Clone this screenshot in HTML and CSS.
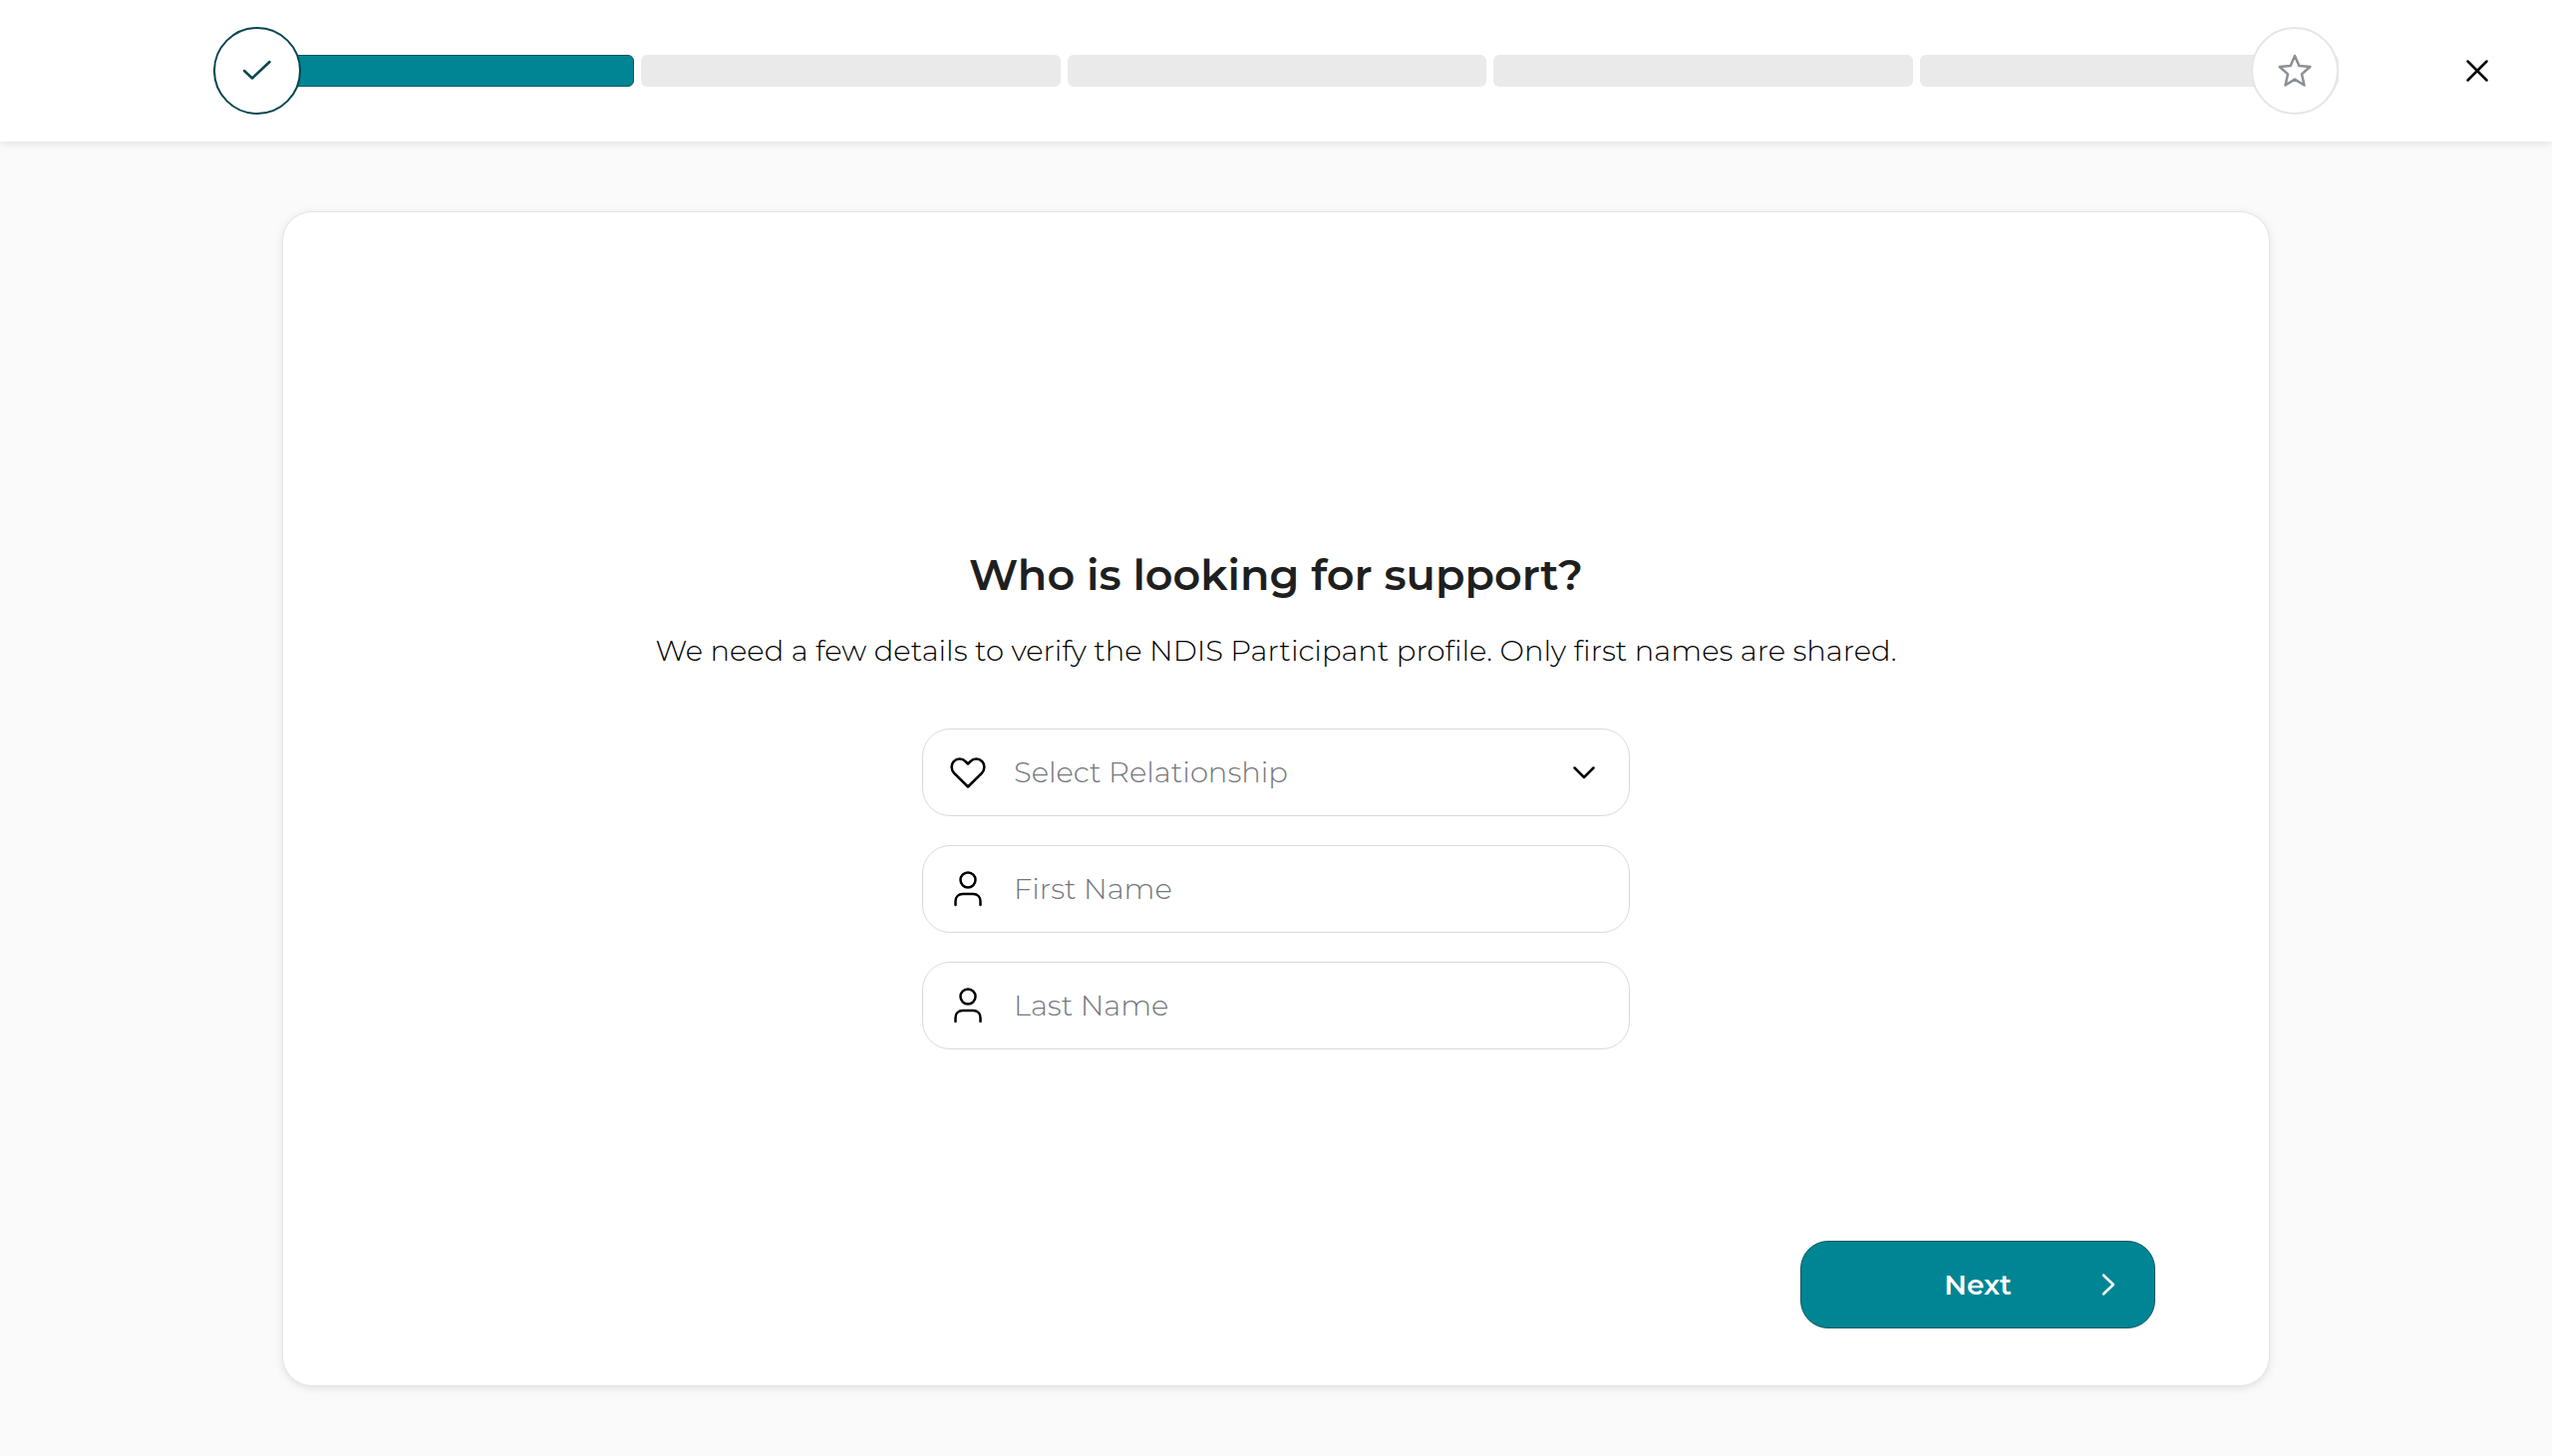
FILE: index.html
```html
<!DOCTYPE html>
<html lang="en">
<head>
    <meta charset="UTF-8">
    <meta name="viewport" content="width=device-width, initial-scale=1.0">
    <title>Who is looking for support?</title>
    <link rel="stylesheet" href="styles.css">
</head>
<body>
    <header class="header">
        <div class="progress">
            <div class="step step-done"></div>
            <div class="step"></div>
            <div class="step"></div>
            <div class="step"></div>
            <div class="step"></div>
            <!-- Round markers over both ends of the bar -->
            <div class="marker marker-start">
                <svg width="32" height="32" viewBox="0 0 32 32"><path d="M3 16l8 7.500L28.500 7"/></svg>
            </div>
            <div class="marker marker-end">
                <svg width="36" height="36" viewBox="0 0 36 36"><path d="M18 3l4.300 10 11 1-8.300 7.400 2.500 11.100L18 26.600 8.500 32.500 11 21.400 2.700 14l11-1z"/></svg>
            </div>
        </div>
        <button type="button" class="btn-close" aria-label="Close">
            <svg width="24" height="24" viewBox="0 0 24 24"><path d="M2.500 2.500l19 19M21.500 2.500l-19 19"/></svg>
        </button>
    </header>

    <main class="main">
        <form class="card">
            <div class="content">
                <h1>Who is looking for support?</h1>
                <p class="intro">We need a few details to verify the NDIS Participant profile. Only first names are shared.</p>

                <div class="fields">
                    <label class="field">
                        <svg class="icon" width="40" height="40" viewBox="0 0 40 40"><path d="M20 34.500L6.200 20.900C3 17.500 2.800 12.500 5.700 9.200c3.300-3.500 8.700-3.400 11.900-.100L20 11.500l2.400-2.400c3.200-3.300 8.600-3.400 11.900.100 2.900 3.300 2.700 8.300-.500 11.700z"/></svg>
                        <select aria-label="Relationship">
                            <option>Select Relationship</option>
                            <option>Myself</option>
                            <option>Family member</option>
                            <option>Friend</option>
                        </select>
                        <svg class="chevron" width="24" height="24" viewBox="0 0 24 24"><path d="M2.500 7.500l9.500 9.500L21.500 7.500"/></svg>
                    </label>
                    <label class="field">
                        <svg class="icon" width="40" height="40" viewBox="0 0 40 40"><circle cx="20" cy="11" r="7.500"/><path d="M7.500 36v-3.500c0-4.500 3-7.500 7.500-7.500h10c4.500 0 7.500 3 7.500 7.500V36"/></svg>
                        <input type="text" placeholder="First Name" aria-label="First Name">
                    </label>
                    <label class="field">
                        <svg class="icon" width="40" height="40" viewBox="0 0 40 40"><circle cx="20" cy="11" r="7.500"/><path d="M7.500 36v-3.500c0-4.500 3-7.500 7.500-7.500h10c4.500 0 7.500 3 7.500 7.500V36"/></svg>
                        <input type="text" placeholder="Last Name" aria-label="Last Name">
                    </label>
                </div>
            </div>

            <button type="button" class="btn-next">
                <span>Next</span>
                <svg width="24" height="24" viewBox="0 0 24 24"><path d="M7 2.500l10 9.500L7 21.500"/></svg>
            </button>
        </form>
    </main>
</body>
</html>
```
FILE: styles.css
```css
* {
    margin: 0;
    padding: 0;
    box-sizing: border-box;
}
body {
    font-family: Montserrat, Inter, sans-serif;
    background: #fafafa;
    color: #1f1f1f;
    min-height: 100vh;
    display: flex;
    flex-direction: column;
}
svg {
    display: block;
    flex: none;
    fill: none;
    stroke: currentColor;
    stroke-width: 2.5;
    stroke-linecap: round;
    stroke-linejoin: round;
}
button {
    font-family: inherit;
    border: none;
    cursor: pointer;
}

/* Header with progress */
.header {
    display: grid;
    grid-template-columns: 214px 1fr 214px;
    align-items: center;
    height: 142px;
    background: #fff;
    box-shadow: 0 2px 8px rgba(0, 0, 0, 0.1);
}
.progress {
    grid-column: 2;
    position: relative;
    display: flex;
    gap: 7px;
}
.step {
    flex: 1;
    height: 32px;
    border-radius: 6px;
    background: #eaeaea;
}
.step-done {
    background: #008594;
    border: 1px solid #055660;
    border-radius: 16px 6px 6px 16px; /* stays hidden under the marker */
}
.marker {
    position: absolute;
    top: 50%;
    transform: translateY(-50%);
    width: 88px;
    height: 88px;
    display: flex;
    align-items: center;
    justify-content: center;
    border-radius: 50%;
    background: #fff;
}
.marker-start {
    left: 0;
    border: 2px solid #07474f;
    color: #07474f;
}
.marker-end {
    right: 0;
    border: 2px solid #e6e6e6;
    color: #8c8f94;
}
.btn-close {
    justify-self: end;
    margin-right: 54px;
    padding: 9px;
    background: none;
    color: #000;
}

/* Card */
.main {
    flex: 1;
    display: flex;
    padding: 70px 283px;
}
.card {
    flex: 1;
    display: grid;
    grid-template-rows: 1fr auto 1fr;
    padding: 57px 114px;
    background: #fff;
    border: 1px solid #e4e4e4;
    border-radius: 30px;
    box-shadow: 0 2px 8px rgba(0, 0, 0, 0.1);
}
.content {
    grid-row: 2;
    text-align: center;
}
h1 {
    font-size: 43px;
    font-weight: 600;
    line-height: 52px;
    margin-bottom: 32px;
}
.intro {
    font-size: 29px;
    font-weight: 300;
    line-height: 36px;
    margin-bottom: 60px;
    color: #000;
}
.fields {
    display: flex;
    flex-direction: column;
    gap: 29px;
    max-width: 710px;
    margin: 0 auto;
}
.field {
    display: flex;
    align-items: center;
    gap: 26px;
    height: 88px;
    padding: 0 33px 0 25px;
    border: 1px solid #dadada;
    border-radius: 28px;
    color: #000;
}
.field input,
.field select {
    flex: 1;
    min-width: 0;
    height: 100%;
    border: none;
    outline: none;
    background: none;
    appearance: none;
    font-family: inherit;
    font-size: 29px;
    font-weight: 300;
    color: #1f1f1f;
}
.field select,
.field input::placeholder {
    color: #74777d;
}

/* Next button */
.btn-next {
    grid-row: 3;
    align-self: end;
    justify-self: end;
    display: grid;
    grid-template-columns: 1fr auto 1fr;
    align-items: center;
    width: 356px;
    height: 88px;
    padding: 0 34px;
    background: #008594;
    border: 1px solid #055660;
    border-radius: 28px;
    color: #fff;
    font-size: 28px;
    font-weight: 600;
}
.btn-next span {
    grid-column: 2;
}
.btn-next svg {
    justify-self: end;
}
```
